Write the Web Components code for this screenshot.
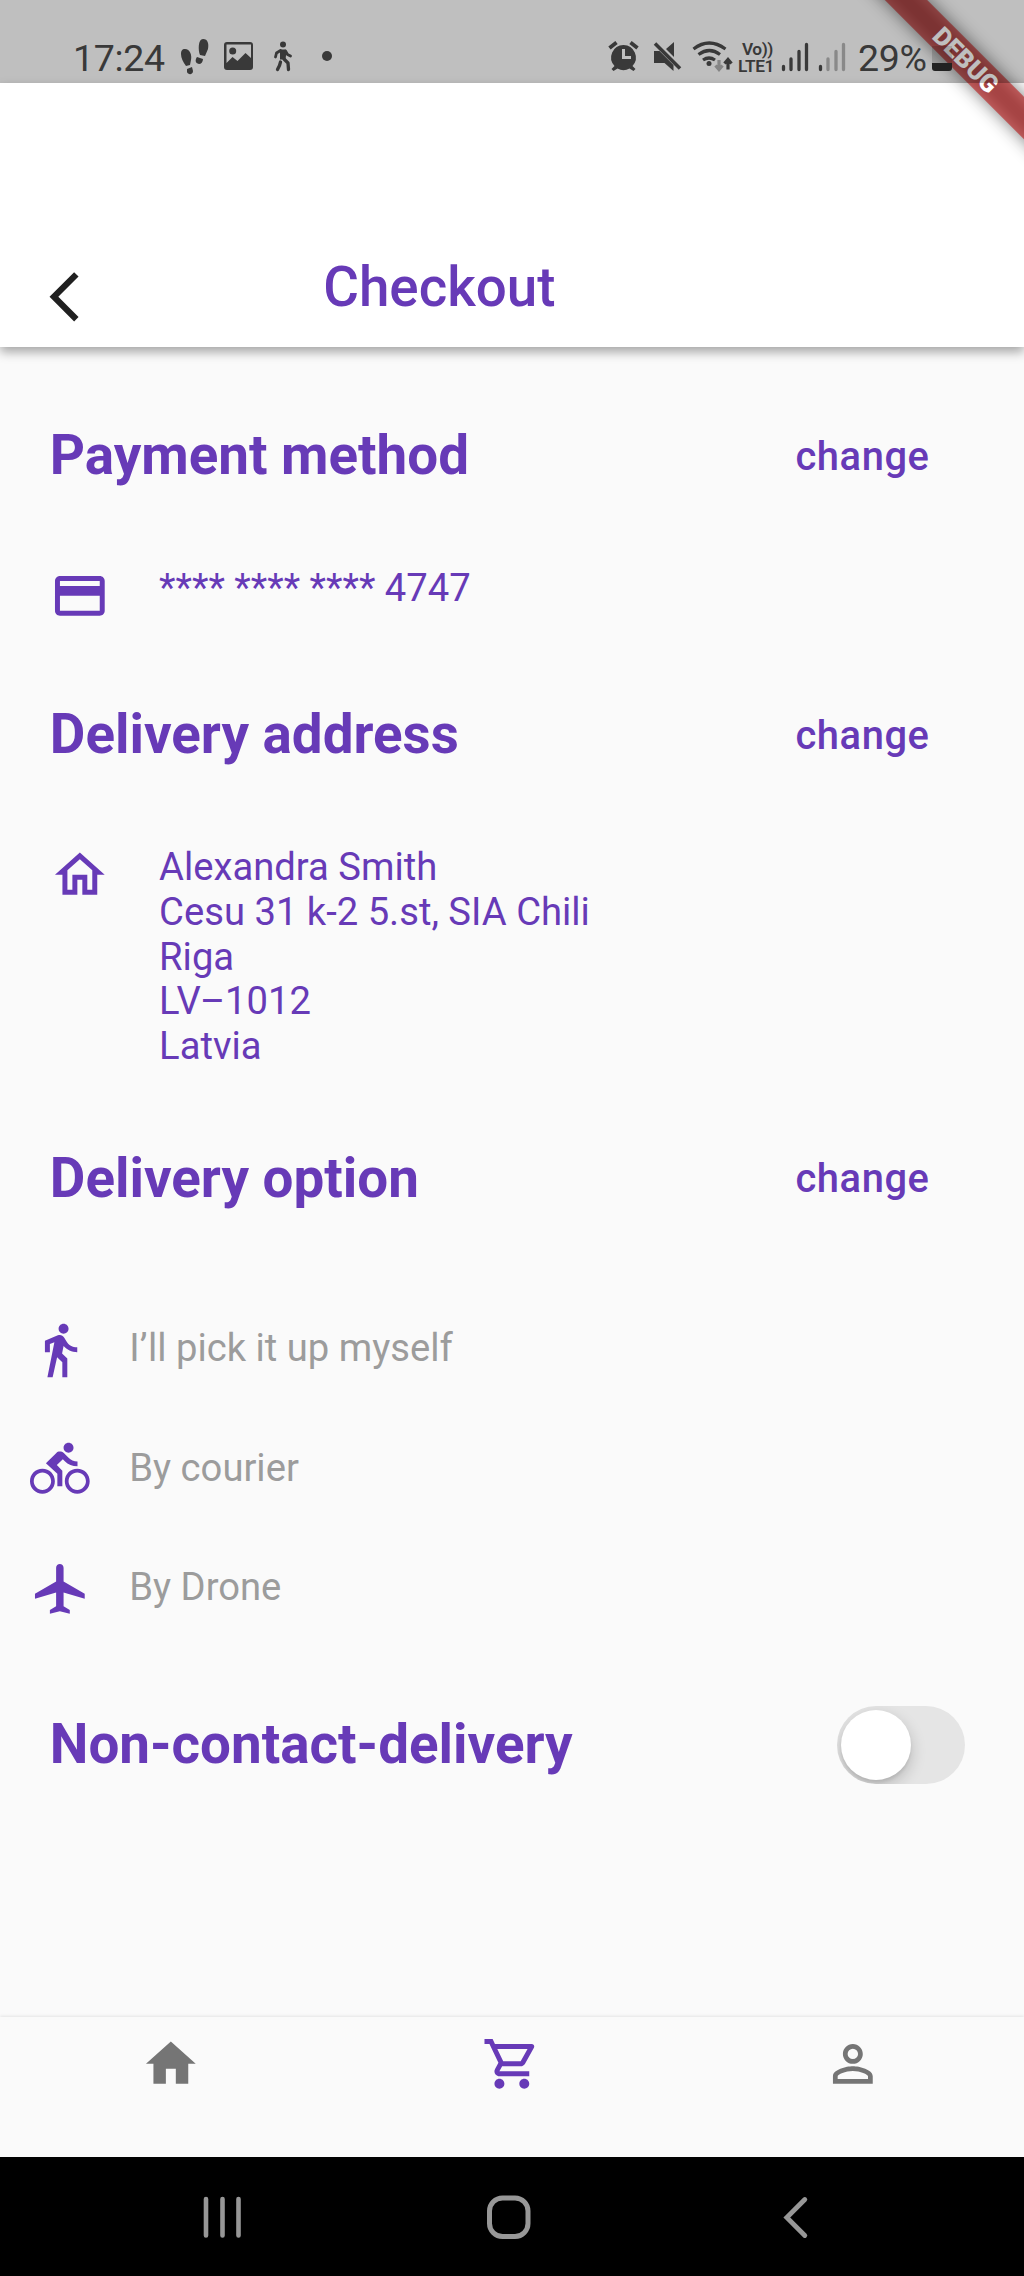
<!DOCTYPE html>
<html lang="en">
<head>
<meta charset="utf-8">
<title>Checkout</title>
<style>
  html, body { margin: 0; background: #fafafa; }
  body { width: 1024px; height: 2276px; overflow: hidden; font-family: Roboto, "Liberation Sans", sans-serif; }
</style>
</head>
<body>
<checkout-app></checkout-app>
<script>
const define = (name, html, setup) => {
  const t = document.createElement('template');
  t.innerHTML = html;
  customElements.define(name, class extends HTMLElement {
    constructor() {
      super();
      this.attachShadow({ mode: 'open' }).append(t.content.cloneNode(true));
    }
    connectedCallback() { if (setup) setup(this, this.shadowRoot); }
  });
};

const ICONS = {
  back: '<path d="M17.51 3.87 15.73 2.1 5.84 12l9.9 9.9 1.77-1.77L9.38 12z"/>',
  card: '<path d="M20 4H4c-1.11 0-1.99.89-1.99 2L2 18c0 1.11.89 2 2 2h16c1.11 0 2-.89 2-2V6c0-1.11-.89-2-2-2zm0 14H4v-6h16v6zm0-10H4V6h16v2z"/>',
  house: '<path d="M12 5.69l5 4.5V18h-2v-6H9v6H7v-7.81l5-4.5M12 3L2 12h3v8h6v-6h2v6h6v-8h3L12 3z"/>',
  walk: '<path d="M13.5 5.5c1.1 0 2-.9 2-2s-.9-2-2-2-2 .9-2 2 .9 2 2 2zM9.8 8.9L7 23h2.1l1.8-8 2.1 2v6h2v-7.5l-2.1-2 .6-3C14.8 12 16.8 13 19 13v-2c-1.9 0-3.5-1-4.3-2.4l-1-1.6c-.4-.6-1-1-1.7-1-.3 0-.5.1-.8.1L6 8.3V13h2V9.6l1.8-.7"/>',
  bike: '<path d="M15.5 5.5c1.1 0 2-.9 2-2s-.9-2-2-2-2 .9-2 2 .9 2 2 2zM5 12c-2.8 0-5 2.2-5 5s2.2 5 5 5 5-2.2 5-5-2.2-5-5-5zm0 8.5c-1.9 0-3.5-1.6-3.5-3.5s1.6-3.5 3.5-3.5 3.5 1.6 3.5 3.5-1.6 3.5-3.5 3.5zM10.8 10.5l2.4-2.4.8.8c1.3 1.3 3 2.1 5.1 2.1V9c-1.5 0-2.7-.6-3.6-1.5l-1.9-1.9c-.5-.4-1-.6-1.6-.6s-1.1.2-1.4.6L6.4 9.8 11 14v5h2v-6.2l-2.2-2.3zM19 12c-2.8 0-5 2.2-5 5s2.2 5 5 5 5-2.2 5-5-2.2-5-5-5zm0 8.5c-1.9 0-3.5-1.6-3.5-3.5s1.6-3.5 3.5-3.5 3.5 1.6 3.5 3.5-1.6 3.5-3.5 3.5z"/>',
  plane: '<path d="M22 16v-2l-8.5-5V3.5c0-.83-.67-1.5-1.5-1.5s-1.5.67-1.5 1.5V9L2 14v2l8.5-2.5V19L8 20.5V22l4-1 4 1v-1.5L13.5 19v-5.5L22 16z"/>',
  home: '<path d="M10 20v-6h4v6h5v-8h3L12 3 2 12h3v8z"/>',
  cart: '<path d="M15.55 13c.75 0 1.41-.41 1.75-1.03l3.58-6.49c.37-.66-.11-1.48-.87-1.48H5.21l-.94-2H1v2h2l3.6 7.59-1.35 2.44C4.52 15.37 5.48 17 7 17h12v-2H7l1.1-2h7.45zM6.16 6h12.15l-2.76 5H8.53L6.16 6zM7 18c-1.1 0-1.99.9-1.99 2S5.9 22 7 22s2-.9 2-2-.9-2-2-2zm10 0c-1.1 0-1.99.9-1.99 2s.89 2 1.99 2 2-.9 2-2-.9-2-2-2z"/>',
  person: '<path d="M12 5.9a2.1 2.1 0 1 1 0 4.2 2.1 2.1 0 0 1 0-4.2m0 9c2.97 0 6.1 1.46 6.1 2.1v1.1H5.9V17c0-.64 3.13-2.1 6.1-2.1M12 4C9.79 4 8 5.79 8 8s1.79 4 4 4 4-1.79 4-4-1.79-4-4-4zm0 9c-2.67 0-8 1.34-8 4v3h16v-3c0-2.66-5.33-4-8-4z"/>'
};

define('app-icon', `
  <style>
    :host { display: block; flex: none; width: 59.7px; height: 59.7px; }
    svg { display: block; width: 100%; height: 100%; fill: currentColor; }
  </style>
  <svg viewBox="0 0 24 24"></svg>`,
  (el, root) => { root.querySelector('svg').innerHTML = ICONS[el.getAttribute('name')]; });

define('debug-ribbon', `
  <style>
    :host { display: block; position: absolute; top: 0; right: 0; width: 230px; height: 230px; overflow: hidden; }
    .shade, .band { position: absolute; left: 12px; top: 45px; width: 320px; height: 30px; transform: rotate(45deg); }
    .shade { background: rgba(0,0,0,.5); filter: blur(8.5px); }
    .band { line-height: 31px; background: rgba(183,28,28,.63);
      color: #fff; font-size: 25.4px; font-weight: 900; text-align: center; }
  </style>
  <div class="shade"></div><div class="band">DEBUG</div>`);

define('status-bar', `
  <style>
    :host { position: relative; display: flex; align-items: flex-start; box-sizing: border-box; height: 83px;
      padding: 38px 0 0 73px; background: rgba(0,0,0,.25); color: #393939; }
    svg { display: block; flex: none; fill: #393939; }
    span { font-size: 37.5px; line-height: 40px; white-space: nowrap; letter-spacing: -.3px; }
    .time { width: 105px; }
    .net { display: flex; flex-direction: column; width: 43px; font-size: 17.3px; line-height: 17px; padding-top: 2.5px; }
    .net b { font-weight: 600; height: 17px; white-space: nowrap; letter-spacing: -.4px; }
  </style>
  <span class="time">17:24</span>
  <svg width="430" height="40" viewBox="178 38 430 40">
    <path d="M185 49c5 0 7 6 6 11l-1 5-4 1c-3-4-5-8-5-12 0-3 1-5 4-5zM187 69l5-2 1 4c0 4-5 4-6 1zM203 39c5 0 6 5 5 10l-3 7-5-1c-2-5-2-16 3-16zM197 57l6 2c0 3-2 5-4 5-4-1-4-4-2-7z"/>
    <path fill-rule="evenodd" d="M227 42h23a3 3 0 0 1 3 3v22a3 3 0 0 1-3 3h-23a3 3 0 0 1-3-3V45a3 3 0 0 1 3-3zm-.5 2.5V63l6-6 5 4 8-8 5.500 5V44.500z"/>
    <circle cx="232.700" cy="51" r="3.500"/>
    <circle cx="283" cy="44.500" r="3"/>
    <path d="M280 49.500h5.500l1 2-1 8h-5.500z"/>
    <g fill="none" stroke="#393939" stroke-width="2.800" stroke-linecap="round" stroke-linejoin="round">
      <path d="M280.500 50.500l-4 2.500-1 4M285.500 51l2 3.500 3 1.500"/>
      <path d="M284 59l4 4 .500 6.500M280.500 62l-1 3.500-2 4" stroke-width="3.300"/>
    </g>
    <circle cx="327" cy="56" r="5"/>
  </svg>
  <svg width="130" height="40" viewBox="608 38 130 40">
    <path fill-rule="evenodd" d="M623.500 45a12.500 12.500 0 0 1 9 21l3 3-2 2-4-2.500a12.500 12.500 0 0 1-12 0l-4 2.500-2-2 3-3a12.500 12.500 0 0 1 9-21zm-1.500 4v10h9v-3h-6v-7z"/>
    <path d="M609.500 48l7-5.500M630.500 42.500l7 5.500" fill="none" stroke="#393939" stroke-width="3.800"/>
    <path d="M654 51h5.500l14 14v6l-9-8H654zM666 49l8-7v15z"/>
    <path d="M655 43.500l25 25" stroke="#393939" stroke-width="3.500"/>
    <g fill="none" stroke="#393939" stroke-width="3.200">
      <path d="M693.500 49q15.500-12 32 0M698.500 54.500q11-8 21.500 0M703 60q6-4 12 0"/>
      <path d="M728 69.500V60M724.500 63.500l3.500-4 3.500 4"/>
      <path d="M719 60v9M715.500 65.500l3.500 4 3.500-4" stroke="#858585"/>
    </g>
    <circle cx="709" cy="63.500" r="2.500"/>
  </svg>
  <div class="net"><b>&nbsp;Vo))</b><b>LTE1</b></div>
  <svg width="77" height="40" viewBox="781 38 77 40">
    <g fill="none" stroke="#393939" stroke-width="3.300" stroke-linecap="round">
      <path d="M783.500 66.500v3M791 59v10.500M799 51.500v18M806.500 44.500v25M820.500 66.500v3"/>
      <path d="M828 59v10.500M836 51.500v18M843.500 44.500v25" stroke="#898989"/>
    </g>
  </svg>
  <span>29%</span>
  <svg style="margin-left:4px" width="24" height="40" viewBox="931 38 24 40">
    <path d="M932 46h20v17h-20z" fill="#000" fill-opacity=".14"/><path d="M932 63h20v5a3 3 0 0 1-3 3h-14a3 3 0 0 1-3-3z" fill="#222"/>
  </svg>`);

define('page-header', `
  <style>
    :host { position: relative; display: flex; align-items: flex-start; box-sizing: border-box; height: 264px;
      padding: 184px 0 0 35.300px; background: #fff; box-shadow: 0 5px 10px rgba(0,0,0,.34); }
    app-icon { color: #202020; margin-top: -.5px; }
    h1 { margin: -12px 0 0 228.200px; font-size: 54.750px; line-height: 64px; font-weight: 500; color: #673ab7; white-space: nowrap; }
  </style>
  <app-icon name="back"></app-icon><h1><slot></slot></h1>`);

define('section-head', `
  <style>
    :host { display: flex; align-items: center; height: 64px; color: #673ab7; }
    h2 { flex: 1; margin: 0; font-size: 54.750px; line-height: 64px; font-weight: 700; white-space: nowrap; }
    .action { width: 228.500px; font-size: 39.900px; letter-spacing: .55px; font-weight: 500; line-height: 64px; padding-top: 3px; }
    .action:empty { display: none; }
  </style>
  <h2><slot></slot></h2><div class="action"></div><slot name="end"></slot>`,
  (el, root) => { root.querySelector('.action').textContent = el.getAttribute('action') || ''; });

define('detail-row', `
  <style>
    :host { display: flex; align-items: flex-start; gap: 49.600px; margin-top: 79px; color: #673ab7;
      font-size: 38.200px; line-height: 44.700px; white-space: nowrap; }
  </style>
  <app-icon></app-icon><div><slot></slot></div>`,
  (el, root) => {
    const icon = document.createElement('app-icon');
    icon.setAttribute('name', el.getAttribute('icon'));
    root.querySelector('app-icon').replaceWith(icon);
  });

define('option-row', `
  <style>
    :host { display: flex; align-items: center; gap: 39.600px; height: 119.500px; color: #9c9c9c; font-size: 38.200px; white-space: nowrap; }
    .pic { color: #673ab7; }
    .label { line-height: 46px; padding-bottom: 2px; }
  </style>
  <div class="pic"></div><div class="label"><slot></slot></div>`,
  (el, root) => { root.querySelector('.pic').innerHTML = '<app-icon name="' + el.getAttribute('icon') + '"></app-icon>'; });

define('toggle-switch', `
  <style>
    :host { display: block; flex: none; box-sizing: border-box; width: 128px; height: 78px; margin-top: 3px; padding: 4px; border-radius: 39px; background: #e5e5e5; overflow: hidden; }
    div { width: 70px; height: 70px; border-radius: 50%; background: #fff; box-shadow: 0 6px 16px rgba(0,0,0,.2), 0 3px 3px rgba(0,0,0,.07); }
  </style>
  <div></div>`);

define('tab-bar', `
  <style>
    :host { display: flex; justify-content: space-around; box-sizing: border-box; height: 140px; padding-top: 17.500px; background: #fafafa;
      color: #757575; box-shadow: 0 -1px 3px rgba(0,0,0,.09); }
    .active { color: #673ab7; }
  </style>
  <app-icon name="home"></app-icon><app-icon class="active" name="cart"></app-icon><app-icon name="person"></app-icon>`);

define('system-nav', `
  <style>
    :host { display: flex; align-items: center; box-sizing: border-box; height: 119.500px; background: #000; padding: 1.500px 0 0 202px; }
    svg { display: block; fill: none; stroke: #979797; stroke-width: 5; stroke-linecap: round; }
    .h { margin-left: 243px; } .b { margin-left: 250px; }
  </style>
  <svg width="41" height="46"><path d="M4 5v36.500M20.500 5v36.500M36.500 5v36.500" stroke-width="4.600"/></svg>
  <svg class="h" width="46" height="46"><rect x="3.500" y="4" width="38.500" height="38.500" rx="13"/></svg>
  <svg class="b" width="30" height="46"><path d="M22.800 5.500 4.800 23.500l18 18" stroke-width="4.800"/></svg>`);

define('checkout-app', `
  <style>
    :host { position: relative; display: flex; flex-direction: column; width: 1024px; height: 2276px; background: #fafafa; overflow: hidden; }
    .white { background: #fff; }
    main { flex: 1; display: flex; flex-direction: column; }
    section { padding: 0 0 0 49.800px; }
    .pay { padding-top: 76.300px; }
    .addr { padding-top: 76.300px; }
    .opt { padding-top: 76.800px; }
    .options { padding: 80px 0 0 30px; }
    .contact { padding: 63.500px 59px 0 49.800px; }
  </style>
  <debug-ribbon style="z-index:1"></debug-ribbon>
  <div class="white"><status-bar style="z-index:2"></status-bar></div>
  <page-header>Checkout</page-header>
  <main>
    <section class="pay">
      <section-head action="change">Payment method</section-head>
      <detail-row icon="card">**** **** **** 4747</detail-row>
    </section>
    <section class="addr">
      <section-head action="change">Delivery address</section-head>
      <detail-row icon="house">Alexandra Smith<br>Cesu 31 k-2 5.st, SIA Chili<br>Riga<br>LV–1012<br>Latvia</detail-row>
    </section>
    <section class="opt"><section-head action="change">Delivery option</section-head></section>
    <div class="options">
      <option-row icon="walk">I’ll pick it up myself</option-row>
      <option-row icon="bike">By courier</option-row>
      <option-row icon="plane">By Drone</option-row>
    </div>
    <section class="contact"><section-head>Non-contact-delivery<toggle-switch slot="end"></toggle-switch></section-head></section>
  </main>
  <tab-bar></tab-bar>
  <system-nav></system-nav>`);
</script>
</body>
</html>
